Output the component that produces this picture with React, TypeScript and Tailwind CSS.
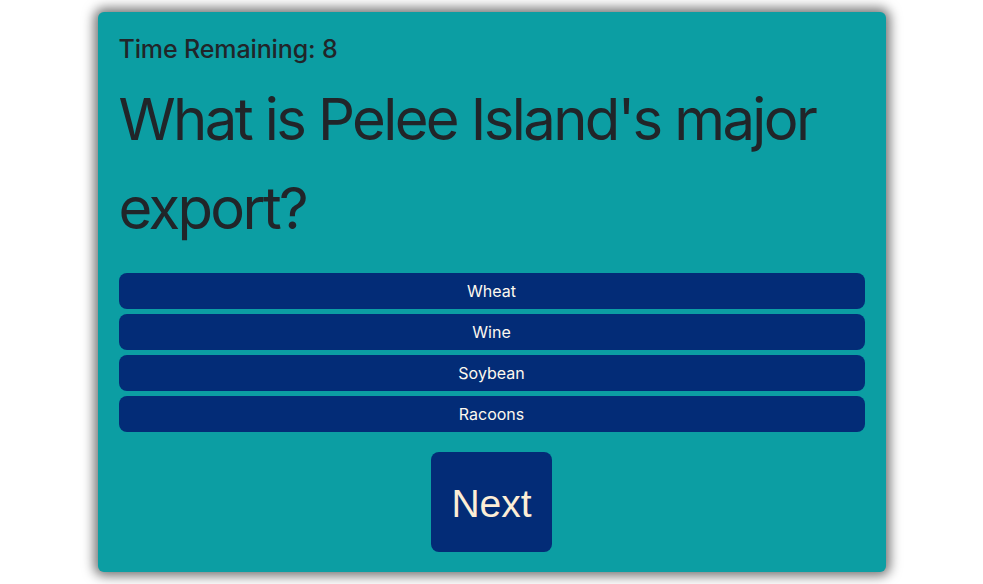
const ANSWERS = ['Wheat', 'Wine', 'Soybean', 'Racoons'];

export default function App() {
  return (
    <div className="min-h-[584px] w-full bg-white font-['Inter',sans-serif] text-[#212529]">
      <div className="mx-auto w-[788px] pt-3">
        <div className="flex flex-col rounded-md bg-[#0c9ea3] px-[21px] pt-[18px] pb-5 shadow-[0_0_12px_4px_rgba(0,0,0,0.55)]">
          <h5 className="text-[25px] leading-[38px] font-medium tracking-[-0.005em]">Time Remaining: 8</h5>
          <h1 className="mt-[7px] text-[58px] leading-[89px] font-normal tracking-[-0.045em]">
            What is Pelee Island's major export?
          </h1>
          <div className="mt-5 flex flex-col gap-[5px]">
            {ANSWERS.map(a => (
              <button
                key={a}
                className="h-9 w-full rounded-lg bg-[#032c77] text-[16px] text-[#fdf8ee]"
              >
                {a}
              </button>
            ))}
          </div>
          <div className="mt-5 flex justify-center">
            <button className="h-[100px] w-[121px] rounded-lg bg-[#032c77] pt-1 font-['Liberation_Sans',sans-serif] text-[39px] text-[#fdeed6]">
              Next
            </button>
          </div>
        </div>
      </div>
    </div>
  );
}
